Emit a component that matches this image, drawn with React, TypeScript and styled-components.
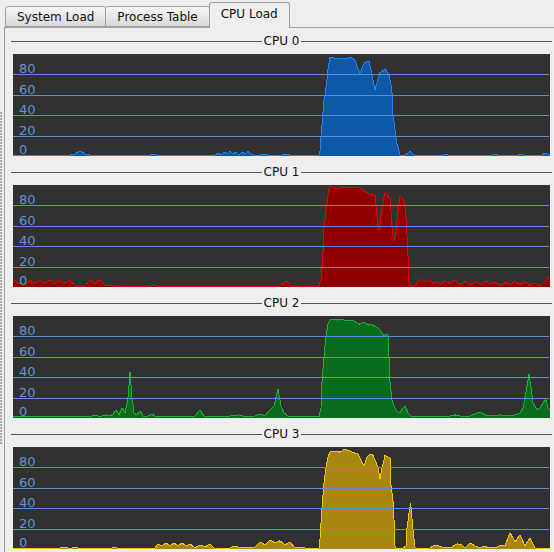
import React from 'react';
import styled, { createGlobalStyle } from 'styled-components';

const GlobalStyle = createGlobalStyle`
  html, body { margin: 0; padding: 0; background: #eeeeee; overflow: hidden; }
  body { font-family: "DejaVu Sans", "Liberation Sans", sans-serif; font-size: 12px; color: #000; }
`;

const Window = styled.div`
  display: flex;
  width: 560px;
  height: 552px;
  overflow: hidden;
`;

const GripColumn = styled.div`
  width: 4px;
  flex: none;
  padding-top: 112px;
  box-sizing: border-box;
`;

const GripDots = styled.div`
  width: 3px;
  height: 333px;
  background-image: radial-gradient(circle at 1px 1px, #a9a9a9 0.9px, transparent 1.1px);
  background-size: 3px 3px;
`;

const TabbedPane = styled.div`
  flex: 1;
  display: flex;
  flex-direction: column;
  min-width: 0;
`;

const TabBar = styled.div`
  height: 27px;
  flex: none;
  display: flex;
  align-items: flex-end;
  padding-left: 1px;
`;

const Tab = styled.div<{ $active?: boolean }>`
  position: relative;
  z-index: ${(p) => (p.$active ? 2 : 1)};
  box-sizing: border-box;
  height: ${(p) => (p.$active ? '26px' : '21px')};
  margin-bottom: ${(p) => (p.$active ? '-1px' : '0')};
  margin-left: -1px;
  &:first-child { margin-left: 0; }
  padding: 0 11px ${(p) => (p.$active ? '3px' : '0')};
  display: flex;
  align-items: center;
  border: 1px solid #a2a2a2;
  border-bottom: ${(p) => (p.$active ? 'none' : '1px solid #a2a2a2')};
  border-radius: 3px 3px 0 0;
  background: ${(p) => (p.$active ? '#eeeeee' : 'linear-gradient(#f7f7f7, #d8d8d8)')};
  color: #111;
  white-space: nowrap;
`;

const Panel = styled.div`
  flex: 1;
  border-left: 1px solid #9d9d9d;
  border-top: 1px solid #9d9d9d;
  padding: 6px 0 0 6px;
  display: flex;
  flex-direction: column;
  gap: 9px;
`;

const Section = styled.section`
  width: 541px;
  display: flex;
  flex-direction: column;
`;

const TitleRow = styled.div`
  height: 15px;
  display: flex;
  align-items: center;
  gap: 2px;
`;

const TitleLine = styled.div`
  flex: 1;
  height: 1px;
  background: #555555;
`;

const TitleText = styled.span`
  line-height: 15px;
  color: #111;
`;

const ChartBox = styled.div`
  margin: 5px 2px 0;
  height: 102px;
  background: #313131;
`;

const ChartSvg = styled.svg`
  display: block;
  overflow: visible;
`;

const GridLine = styled.line`
  stroke: #5b8ed6;
  stroke-width: 1;
`;

const AxisLabel = styled.text`
  fill: #6792cf;
  font-family: "DejaVu Sans", "Liberation Sans", sans-serif;
  font-size: 13px;
`;

const Area = styled.path<{ $c: string }>`
  fill: ${(p) => p.$c};
  stroke: none;
`;

const Edge = styled.polyline<{ $c: string }>`
  fill: none;
  stroke: ${(p) => p.$c};
  stroke-width: 1;
`;

type Pt = [number, number];

const W = 537;
const H = 102;
const X0 = 13;

const cpu0: Pt[] = [[13,1],[70,1],[75,2],[80,5],[85,2],[90,1],[150,1],[153,2],[157,1],[215,1],[218,3],[221,1],[224,4],[227,2],[230,5],[233,2],[236,4],[239,1],[242,4],[245,2],[248,5],[251,2],[254,1],[260,1],[265,2],[268,1],[282,1],[285,2],[290,1],[300,1],[319,1],[320,5],[321,20],[322,30],[324,55],[325,60],[327,75],[328,85],[330,97],[333,97],[334,96],[343,96],[346,95],[350,97],[352,96],[355,94],[357,88],[360,81],[362,86],[365,92],[369,93],[372,80],[375,65],[378,75],[380,82],[382,83],[385,85],[389,80],[391,70],[392,62],[393,40],[395,26],[396,18],[397,12],[399,5],[400,1],[405,1],[408,3],[410,5],[413,2],[415,1],[443,1],[445,2],[448,1],[493,1],[495,2],[498,1],[518,1],[520,2],[523,1],[542,1],[545,3],[548,2],[550,1]];

const cpu1: Pt[] = [[13,5],[15,7],[18,3],[22,4],[25,2],[30,7],[34,3],[40,7],[44,3],[50,7],[54,3],[60,7],[64,3],[70,7],[75,1],[85,1],[90,7],[95,3],[100,7],[105,2],[112,2],[113,1],[150,1],[153,2],[156,1],[280,1],[284,4],[287,6],[290,1],[319,1],[321,8],[322,20],[323,33],[324,59],[326,75],[328,90],[330,99],[333,98],[335,97],[340,97],[345,98],[350,97],[355,98],[360,97],[363,95],[366,93],[370,91],[373,90],[375,90],[376,80],[377,70],[378,60],[379,56],[380,65],[382,75],[384,88],[385,92],[387,90],[390,86],[391,75],[392,60],[393,50],[394,45],[395,47],[396,55],[398,75],[400,89],[402,87],[404,83],[405,78],[406,68],[407,50],[408,30],[409,5],[410,1],[415,1],[418,5],[421,8],[423,5],[427,5],[430,7],[433,3],[436,6],[440,2],[445,6],[450,3],[455,7],[460,2],[466,6],[470,2],[476,5],[480,2],[486,6],[490,3],[495,5],[500,1],[506,5],[510,2],[515,6],[520,2],[525,5],[530,2],[535,4],[540,1],[545,6],[550,10]];

const cpu2: Pt[] = [[13,2],[40,2],[45,1],[60,2],[90,1],[95,3],[100,1],[105,3],[110,2],[113,4],[116,8],[119,3],[122,10],[125,5],[128,20],[130,45],[132,20],[134,5],[137,3],[140,7],[143,2],[148,2],[152,4],[156,1],[170,2],[180,1],[195,2],[200,8],[204,2],[215,1],[230,2],[240,3],[245,1],[255,2],[260,4],[265,2],[270,8],[274,12],[278,28],[281,12],[284,5],[288,2],[300,1],[318,2],[319,1],[321,10],[322,35],[324,60],[326,80],[328,92],[330,96],[333,97],[338,96],[342,97],[346,95],[350,96],[354,95],[357,93],[360,92],[364,94],[368,91],[371,92],[375,90],[378,88],[381,85],[384,81],[387,82],[388,80],[389,60],[390,35],[392,18],[394,12],[396,8],[398,6],[400,5],[403,10],[405,12],[408,5],[411,2],[420,2],[425,1],[440,2],[445,1],[455,3],[460,2],[470,2],[475,4],[480,6],[485,3],[490,2],[500,3],[505,2],[515,3],[520,5],[523,10],[526,25],[529,43],[531,30],[533,15],[537,8],[540,10],[543,15],[546,18],[548,10],[550,8]];

const cpu3: Pt[] = [[13,1],[60,1],[63,2],[66,2],[68,1],[72,1],[74,2],[78,1],[112,1],[114,2],[117,1],[155,1],[158,5],[162,3],[166,6],[170,3],[174,6],[178,3],[182,6],[186,3],[190,5],[195,1],[200,4],[205,2],[210,5],[214,1],[230,1],[235,3],[240,1],[255,2],[260,7],[265,4],[270,9],[275,6],[280,8],[285,4],[290,7],[295,1],[300,2],[305,1],[319,1],[320,10],[322,40],[324,65],[326,80],[328,90],[330,95],[335,96],[340,95],[345,98],[350,96],[355,94],[358,93],[362,85],[364,82],[367,90],[370,93],[373,92],[376,85],[378,80],[380,69],[382,80],[383,83],[385,92],[388,90],[390,90],[391,63],[393,47],[394,29],[395,3],[396,1],[403,1],[406,3],[407,20],[409,35],[410.7,45],[412,30],[414,10],[415,2],[416,1],[430,1],[435,4],[442,2],[452,2],[457,5],[462,4],[465,1],[470,6],[475,3],[480,1],[485,3],[488,1],[497,2],[502,4],[505,3],[510,16],[515,7],[520,14],[525,3],[530,11],[535,1],[547,1],[550,1]];

const charts = [
  { title: 'CPU 0', data: cpu0, fill: '#0e58a8', stroke: '#1f86f2' },
  { title: 'CPU 1', data: cpu1, fill: '#8e0000', stroke: '#e80000' },
  { title: 'CPU 2', data: cpu2, fill: '#0a6b1c', stroke: '#18b232' },
  { title: 'CPU 3', data: cpu3, fill: '#a9860f', stroke: '#f7c600' },
];

const toXY = (p: Pt) => [p[0] - X0, H - (p[1] * H) / 100] as const;

function LoadChart({ data, fill, stroke }: { data: Pt[]; fill: string; stroke: string }) {
  const pts = data.map(toXY);
  const line = pts.map(([x, y]) => `${x.toFixed(1)},${y.toFixed(1)}`).join(' ');
  const area = `M${pts[0][0]},${H} L${line.split(' ').join(' L')} L${pts[pts.length - 1][0]},${H} Z`;
  const grid = [20, 40, 60, 80];
  return (
    <ChartSvg width={W} height={H} viewBox={`0 0 ${W} ${H}`}>
      <Area $c={fill} d={area} shapeRendering="crispEdges" />
      <Edge $c={stroke} points={line} shapeRendering="crispEdges" />
      {grid.map((g) => {
        const y = Math.round(H - (g * H) / 100) + 0.5;
        return <GridLine key={g} x1={0} x2={W - 1} y1={y} y2={y} />;
      })}
      {[0, 20, 40, 60, 80].map((g) => {
        const y = Math.round(H - (g * H) / 100) - (g === 0 ? 2 : 1);
        return (
          <AxisLabel key={g} x={6} y={y}>
            {g}
          </AxisLabel>
        );
      })}
    </ChartSvg>
  );
}

export default function App() {
  return (
    <>
      <GlobalStyle />
      <Window>
        <GripColumn>
          <GripDots />
        </GripColumn>
        <TabbedPane>
          <TabBar>
            <Tab>System Load</Tab>
            <Tab>Process Table</Tab>
            <Tab $active>CPU Load</Tab>
          </TabBar>
          <Panel>
            {charts.map((c) => (
              <Section key={c.title}>
                <TitleRow>
                  <TitleLine />
                  <TitleText>{c.title}</TitleText>
                  <TitleLine />
                </TitleRow>
                <ChartBox>
                  <LoadChart data={c.data} fill={c.fill} stroke={c.stroke} />
                </ChartBox>
              </Section>
            ))}
          </Panel>
        </TabbedPane>
      </Window>
    </>
  );
}
